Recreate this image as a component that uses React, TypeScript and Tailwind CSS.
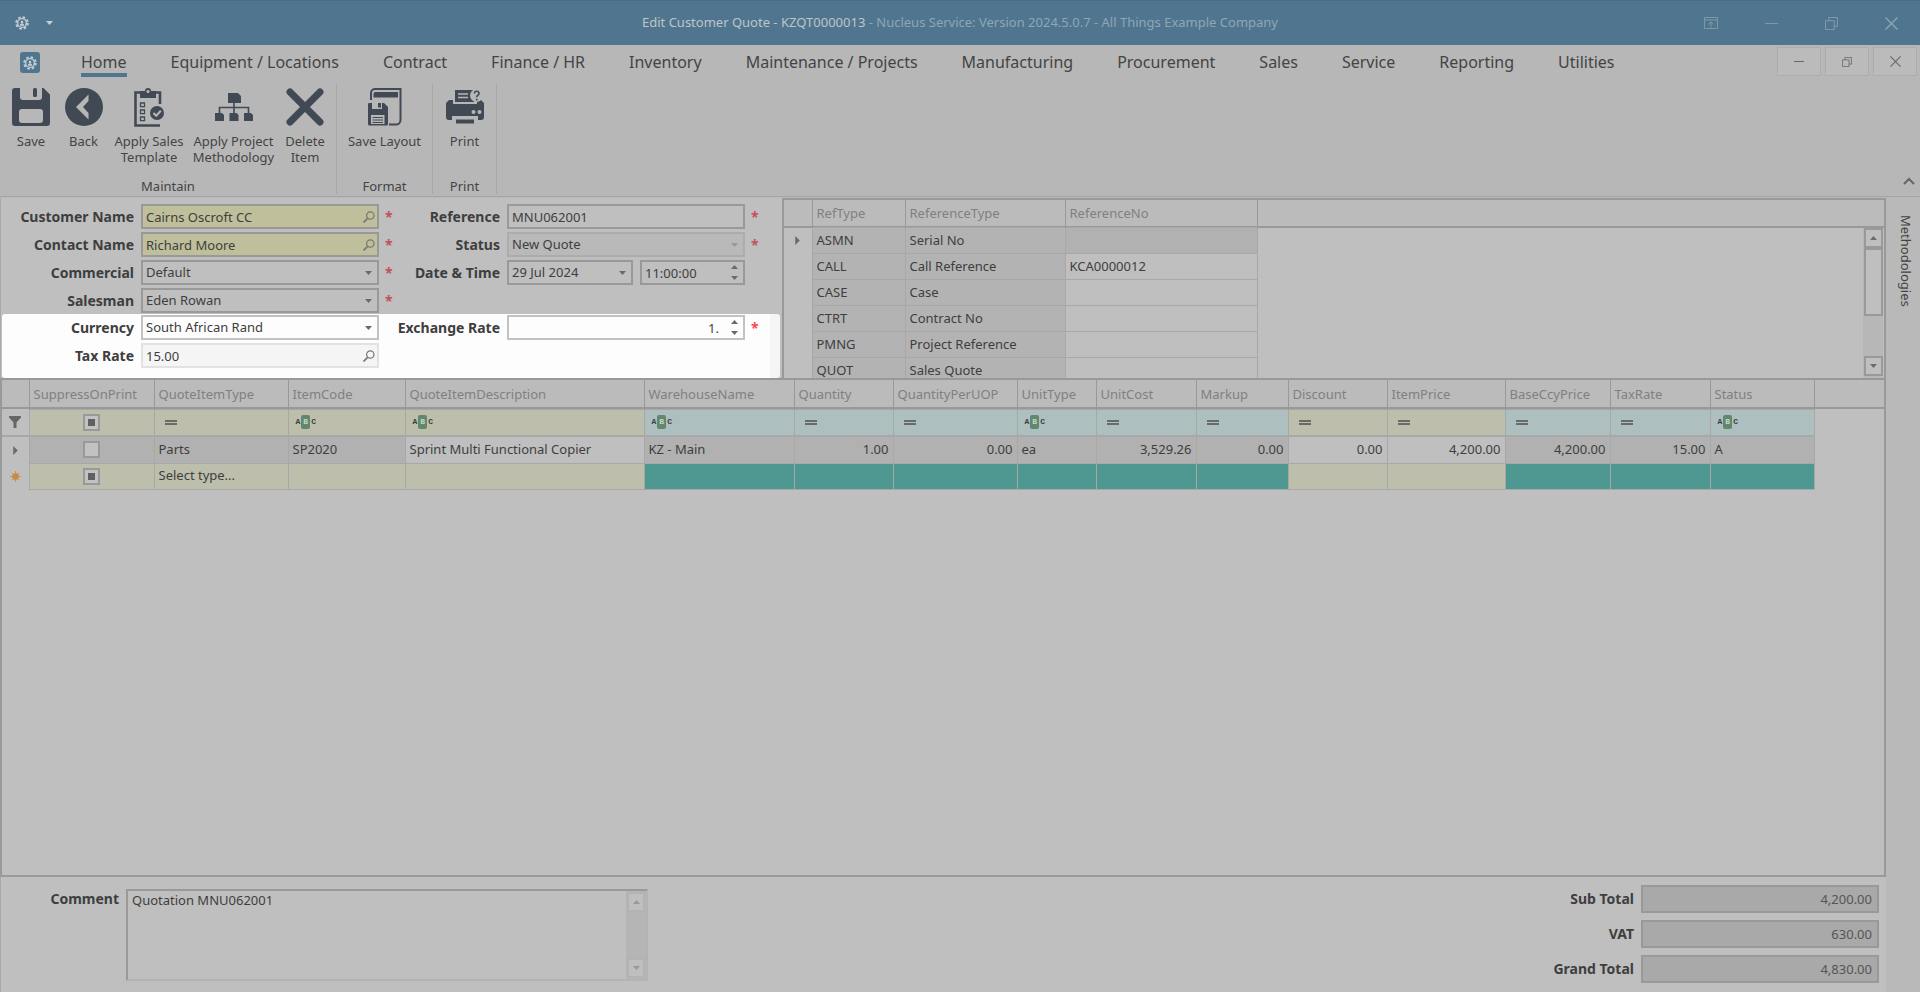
import { useState } from 'react';
import type { ReactNode } from 'react';
import clsx from 'clsx';

const TABS = [
  'Home',
  'Equipment / Locations',
  'Contract',
  'Finance / HR',
  'Inventory',
  'Maintenance / Projects',
  'Manufacturing',
  'Procurement',
  'Sales',
  'Service',
  'Reporting',
  'Utilities',
];

const REFERENCES = [
  { type: 'ASMN', name: 'Serial No', no: '' },
  { type: 'CALL', name: 'Call Reference', no: 'KCA0000012' },
  { type: 'CASE', name: 'Case', no: '' },
  { type: 'CTRT', name: 'Contract No', no: '' },
  { type: 'PMNG', name: 'Project Reference', no: '' },
  { type: 'QUOT', name: 'Sales Quote', no: '' },
];

type QuoteColumn = {
  name: string;
  width: string;
  filter: 'check' | 'equals' | 'text';
  value: string;
  newValue?: string;
  numeric?: boolean;
  editable?: boolean;
  tone: 'sand' | 'teal';
};

const COLUMNS: QuoteColumn[] = [
  { name: 'SuppressOnPrint', width: 'w-[125px]', filter: 'check', value: '', tone: 'sand' },
  { name: 'QuoteItemType', width: 'w-[134px]', filter: 'equals', value: 'Parts', newValue: 'Select type...', tone: 'sand' },
  { name: 'ItemCode', width: 'w-[117px]', filter: 'text', value: 'SP2020', tone: 'sand' },
  { name: 'QuoteItemDescription', width: 'w-[239px]', filter: 'text', value: 'Sprint Multi Functional Copier', editable: true, tone: 'sand' },
  { name: 'WarehouseName', width: 'w-[150px]', filter: 'text', value: 'KZ - Main', tone: 'teal' },
  { name: 'Quantity', width: 'w-[99px]', filter: 'equals', value: '1.00', numeric: true, tone: 'teal' },
  { name: 'QuantityPerUOP', width: 'w-[124px]', filter: 'equals', value: '0.00', numeric: true, tone: 'teal' },
  { name: 'UnitType', width: 'w-[79px]', filter: 'text', value: 'ea', tone: 'teal' },
  { name: 'UnitCost', width: 'w-[100px]', filter: 'equals', value: '3,529.26', numeric: true, tone: 'teal' },
  { name: 'Markup', width: 'w-[92px]', filter: 'equals', value: '0.00', numeric: true, tone: 'teal' },
  { name: 'Discount', width: 'w-[99px]', filter: 'equals', value: '0.00', numeric: true, editable: true, tone: 'sand' },
  { name: 'ItemPrice', width: 'w-[118px]', filter: 'equals', value: '4,200.00', numeric: true, editable: true, tone: 'sand' },
  { name: 'BaseCcyPrice', width: 'w-[105px]', filter: 'equals', value: '4,200.00', numeric: true, tone: 'teal' },
  { name: 'TaxRate', width: 'w-[100px]', filter: 'equals', value: '15.00', numeric: true, tone: 'teal' },
  { name: 'Status', width: 'w-[104px]', filter: 'text', value: 'A', tone: 'teal' },
];

const TOTALS = [
  { id: 'subTotal', label: 'Sub Total', value: '4,200.00' },
  { id: 'vat', label: 'VAT', value: '630.00' },
  { id: 'grandTotal', label: 'Grand Total', value: '4,830.00' },
];

/* ---------- icons ---------- */

function GearIcon({ className }: { className?: string }) {
  return (
    <svg viewBox="0 0 16 16" className={className} fill="none" stroke="currentColor">
      <circle cx="8" cy="8" r="5" strokeWidth="1.6" />
      <circle cx="8" cy="8" r="6.7" strokeWidth="2" strokeDasharray="2.9 2.36" />
      <circle cx="8" cy="6.8" r="1.5" fill="currentColor" stroke="none" />
      <path d="M5.600 11c0-3.600 4.800-3.600 4.800 0z" fill="currentColor" stroke="none" />
    </svg>
  );
}

function SaveIcon() {
  return (
    <svg viewBox="0 0 38 38" className="size-[38px]" fill="currentColor">
      <path
        fillRule="evenodd"
        d="M3 0h5v9a3 3 0 0 0 3 3h16a3 3 0 0 0 3-3V0h1.500l6.500 6.500V35a3 3 0 0 1-3 3H3a3 3 0 0 1-3-3V3a3 3 0 0 1 3-3zM10 21a3 3 0 0 0-3 3v8a3 3 0 0 0 3 3h18a3 3 0 0 0 3-3v-8a3 3 0 0 0-3-3z"
      />
      <rect x="21" y="0" width="4" height="9" rx="1.500" />
    </svg>
  );
}

function BackIcon() {
  return (
    <svg viewBox="0 0 38 38" className="size-[38px]">
      <circle cx="19" cy="19" r="19" fill="currentColor" />
      <path d="M23.500 6.500v6.500L18 19l5.500 6v6.500L11 19z" fill="#b7b7b7" />
    </svg>
  );
}

function ClipboardIcon() {
  return (
    <svg viewBox="0 0 32 40" className="h-10 w-8" fill="none" stroke="currentColor">
      <path d="M27 38.500H2.500v-33H27V17" strokeWidth="2.600" />
      <path d="M7 4h5a3 3 0 0 1 6 0h5v7H7z" fill="currentColor" stroke="none" />
      <circle cx="15" cy="4.500" r="1.600" fill="#b7b7b7" stroke="none" />
      <path d="M7.500 16h4v3.600h-4zM7.500 23h4v3.600h-4zM7.500 30h4v3.600h-4z" strokeWidth="1.300" />
      <circle cx="24" cy="26" r="7" fill="currentColor" stroke="none" />
      <path d="M20.500 26l2.700 2.700 4.600-5" stroke="#b7b7b7" strokeWidth="2" />
    </svg>
  );
}

function OrgIcon() {
  return (
    <svg viewBox="0 0 40 28" className="h-7 w-10" fill="currentColor">
      <path d="M14 0h10l3 3v7H14zM1 20h7l2 2v6H1zM15.500 20h7l2 2v6h-9zM30 20h7l2 2v6h-9z" />
      <path d="M20 9v11M5.500 20v-5.500h29V20" fill="none" stroke="currentColor" strokeWidth="1.600" />
    </svg>
  );
}

function DeleteIcon() {
  return (
    <svg viewBox="0 0 38 38" className="size-[38px]" fill="none" stroke="currentColor" strokeWidth="7" strokeLinecap="round">
      <path d="M4 4l30 30M34 4L4 34" />
    </svg>
  );
}

function SaveLayoutIcon() {
  return (
    <svg viewBox="0 0 36 40" className="h-10 w-9" fill="currentColor">
      <path d="M4 13V6a4 4 0 0 1 4-4h25.500v31a4.500 4.500 0 0 1-4.500 4.500h-7" fill="none" stroke="currentColor" strokeWidth="2" />
      <path d="M8 5h23v5.500H6.500V7A2 2 0 0 1 8 5z" />
      <path
        fillRule="evenodd"
        d="M2 16h3v6h10v-6h2l4 4v17a1.500 1.500 0 0 1-1.500 1.500h-17A1.500 1.500 0 0 1 1 37V17a1 1 0 0 1 1-1zM4 28v9h13.500v-9z"
      />
      <path d="M5.500 30.500h10.500M5.500 33h10.500M5.500 35.500h10.500" stroke="currentColor" strokeWidth="1.200" />
      <rect x="11" y="16" width="3" height="4.500" />
    </svg>
  );
}

function PrintIcon() {
  return (
    <svg viewBox="0 0 38 38" className="size-[38px]" fill="currentColor">
      <path d="M9 2h19v12H9z" />
      <path d="M12 6h10M12 9.500h10" stroke="#b7b7b7" strokeWidth="1.500" />
      <path d="M3 12h4v4h24v-4h4l3 3v14a3 3 0 0 1-3 3h-3v-4H6v4H3a3 3 0 0 1-3-3V15z" />
      <path d="M10 31.500h18v4H10z" />
      <circle cx="27.500" cy="24" r="2" fill="#b7b7b7" />
      <circle cx="33.500" cy="24" r="2" fill="#b7b7b7" />
      <circle cx="30.500" cy="7.500" r="6.500" fill="#b7b7b7" />
      <path d="M28.500 5.500c0-3 4.500-3 4.500 0 0 1.800-2.300 1.700-2.300 3.800M30.700 10.800v1.600" fill="none" stroke="currentColor" strokeWidth="1.600" />
    </svg>
  );
}

function RestoreIcon({ className }: { className?: string }) {
  return (
    <svg viewBox="0 0 12 12" className={className} fill="none" stroke="currentColor">
      <path d="M.5 3.500h8v8h-8zM3.500 3.500v-3h8v8h-3" />
    </svg>
  );
}

function CloseIcon({ className }: { className?: string }) {
  return (
    <svg viewBox="0 0 12 12" className={className} fill="none" stroke="currentColor" strokeWidth="1.200">
      <path d="M.5.5l11 11M11.500.5l-11 11" />
    </svg>
  );
}

function MagnifierIcon() {
  return (
    <svg viewBox="0 0 12 12" className="size-3" fill="none" stroke="#777" strokeWidth="1.200">
      <circle cx="7.300" cy="4.500" r="3.700" />
      <path d="M4.600 7.300L.5 11.500" strokeWidth="1.700" />
    </svg>
  );
}

function Arrow({ dir, className = 'text-[#6a6a6a]' }: { dir: 'up' | 'down' | 'right'; className?: string }) {
  const paths = { up: 'M0 4l3.500-4L7 4z', down: 'M0 0h7L3.500 4z', right: 'M0 0l4 4-4 4z' };
  return dir === 'right' ? (
    <svg viewBox="0 0 4 8" className={clsx('h-[9px] w-[5px]', className)} fill="currentColor">
      <path d={paths.right} />
    </svg>
  ) : (
    <svg viewBox="0 0 7 4" className={clsx('h-1 w-[7px]', className)} fill="currentColor">
      <path d={paths[dir]} />
    </svg>
  );
}

/* ---------- shell ---------- */

function TitleBar() {
  return (
    <header className="grid h-[45px] grid-cols-[1fr_auto_1fr] items-center border-t border-[#4a6c82] bg-[#50768f]">
      <div className="flex items-center gap-[17px] pl-[15px] text-[#c6cfd4]">
        <GearIcon className="size-[14px]" />
        <button type="button" aria-label="Quick access">
          <Arrow dir="down" className="text-[#c6cfd4]" />
        </button>
      </div>
      <h1 className="text-[#bfc4c8]">
        Edit Customer Quote - KZQT0000013
        <span className="text-[#8fa6b5]"> - Nucleus Service: Version 2024.5.0.7 - All Things Example Company</span>
      </h1>
      <div className="flex items-center justify-end gap-[47px] pr-[22px] text-[#7c98a9]">
        <button type="button" aria-label="Ribbon display">
          <svg viewBox="0 0 14 12" className="h-3 w-[14px]" fill="none" stroke="currentColor">
            <path d="M.5.5h13v11H.5zM.5 3h13M7 10.500v-5M4.500 7.500L7 5l2.500 2.500" />
          </svg>
        </button>
        <button type="button" aria-label="Minimise" className="h-px w-[13px] bg-[#7c98a9]" />
        <button type="button" aria-label="Restore">
          <RestoreIcon className="size-[13px]" />
        </button>
        <button type="button" aria-label="Close">
          <CloseIcon className="size-[13px] text-[#8fa6b5]" />
        </button>
      </div>
    </header>
  );
}

function TabBar() {
  const [active, setActive] = useState('Home');

  return (
    <div className="flex h-[35px] items-start bg-[#b7b7b7]">
      <button type="button" aria-label="Application menu" className="mt-[7px] ml-5 flex h-[21px] w-5 items-center justify-center rounded-[3px] bg-[#50768f] text-[#c6cfd4]">
        <GearIcon className="size-[14px]" />
      </button>
      <nav className="ml-[41px] flex gap-11 text-base text-[#444]">
        {TABS.map((tab) => (
          <button
            key={tab}
            type="button"
            onClick={() => setActive(tab)}
            className={clsx('h-8 border-b-4 pt-[6px] leading-[22px] whitespace-nowrap', active === tab ? 'border-[#50768f]' : 'border-transparent')}
          >
            {tab}
          </button>
        ))}
      </nav>
      <div className="mt-[2px] ml-auto flex gap-1 pr-[3px] text-[#666]">
        <WindowButton label="Minimise document">
          <span className="h-px w-[10px] bg-[#666]" />
        </WindowButton>
        <WindowButton label="Restore document">
          <RestoreIcon className="size-[10px]" />
        </WindowButton>
        <WindowButton label="Close document">
          <CloseIcon className="size-[11px]" />
        </WindowButton>
      </div>
    </div>
  );
}

function WindowButton({ label, children }: { label: string; children: ReactNode }) {
  return (
    <button type="button" aria-label={label} className="flex h-[29px] w-11 items-center justify-center border border-[#adadad] bg-[#bbb]">
      {children}
    </button>
  );
}

function RibbonGroup({ title, children }: { title: string; children: ReactNode }) {
  return (
    <section className="flex flex-col border-r border-[#a8a8a8]">
      <div className="flex flex-1">{children}</div>
      <h2 className="text-center leading-4">{title}</h2>
    </section>
  );
}

function RibbonButton({ icon, label, className }: { icon: ReactNode; label: string; className: string }) {
  return (
    <button type="button" className={clsx('flex flex-col items-center gap-[3px]', className)}>
      <span className="flex h-[46px] items-center text-[#414a54]">{icon}</span>
      <span className="leading-4">{label}</span>
    </button>
  );
}

function Ribbon() {
  return (
    <div className="flex h-[117px] border-b border-[#a5a5a5] bg-[#b7b7b7] pt-1 pb-[2px] text-[#444]">
      <RibbonGroup title="Maintain">
        <RibbonButton icon={<SaveIcon />} label="Save" className="ml-1 w-[54px]" />
        <RibbonButton icon={<BackIcon />} label="Back" className="w-[51px]" />
        <RibbonButton icon={<ClipboardIcon />} label="Apply Sales Template" className="w-20" />
        <RibbonButton icon={<OrgIcon />} label="Apply Project Methodology" className="w-[89px]" />
        <RibbonButton icon={<DeleteIcon />} label="Delete Item" className="mr-1 w-[54px]" />
      </RibbonGroup>
      <RibbonGroup title="Format">
        <RibbonButton icon={<SaveLayoutIcon />} label="Save Layout" className="w-[95px]" />
      </RibbonGroup>
      <RibbonGroup title="Print">
        <RibbonButton icon={<PrintIcon />} label="Print" className="w-[63px]" />
      </RibbonGroup>
      <button type="button" aria-label="Collapse ribbon" className="mt-auto mr-[5px] mb-[9px] ml-auto">
        <svg viewBox="0 0 12 8" className="h-2 w-3" fill="none" stroke="#666" strokeWidth="2">
          <path d="M1 7l5-5 5 5" />
        </svg>
      </button>
    </div>
  );
}

/* ---------- quote form ---------- */

interface FieldProps {
  id: string;
  label: string;
  value: string;
  kind?: 'text' | 'lookup' | 'select' | 'spin';
  look?: string;
  required?: boolean;
  align?: string;
  faded?: boolean;
  labelWidth?: string;
  starColor?: string;
}

const DIM = 'border-[#999] bg-[#bfbfbf]';
const BRIGHT = 'border-[#c2c2c2] bg-[#fdfdfd]';
const NARROW = 'w-[107px]';

function Control({ id, label, value, kind = 'text', look = DIM, align, faded }: FieldProps) {
  const box = clsx('h-[25px] w-full border-2 px-[3px] outline-none', look, align);
  return (
    <div className="relative min-w-0 flex-1">
      {kind === 'select' ? (
        <select id={id} className={clsx(box, 'appearance-none')} defaultValue={value}>
          <option>{value}</option>
        </select>
      ) : (
        <input id={id} className={clsx(box, kind !== 'text' && 'pr-6')} defaultValue={value} />
      )}
      {kind === 'select' && (
        <span className="pointer-events-none absolute inset-y-0 right-[7px] flex items-center">
          <Arrow dir="down" className={faded ? 'text-[#999]' : undefined} />
        </span>
      )}
      {kind === 'lookup' && (
        <button type="button" aria-label={`Find ${label}`} className="absolute inset-y-0 right-1 flex items-center">
          <MagnifierIcon />
        </button>
      )}
      {kind === 'spin' && (
        <span className="absolute inset-y-0 right-[7px] flex flex-col justify-center gap-[7px]">
          <button type="button" aria-label={`Increase ${label}`}>
            <Arrow dir="up" />
          </button>
          <button type="button" aria-label={`Decrease ${label}`}>
            <Arrow dir="down" />
          </button>
        </span>
      )}
    </div>
  );
}

function Field({ children, labelWidth = 'w-[132px]', starColor = 'text-[#c4505a]', ...field }: FieldProps & { children?: ReactNode }) {
  return (
    <div className="flex h-[25px] items-center">
      <label htmlFor={field.id} className={clsx('shrink-0 text-right text-sm font-bold whitespace-nowrap', labelWidth)}>
        {field.label}
      </label>
      <div className="ml-[7px] flex w-[238px] shrink-0 gap-[7px]">{children ?? <Control {...field} />}</div>
      {field.required && <span className={clsx('ml-[6px] text-sm font-bold', starColor)}>*</span>}
    </div>
  );
}

function QuoteForm() {
  const khaki = 'border-[#999] bg-[#bfbf9b]';
  return (
    <form className="flex w-[782px] shrink-0 flex-col border-l border-[#aaa] bg-[#bfbfbf] pt-[6px] pr-[2px] pl-px text-[#3e3e3e]">
      <div className="grid grid-cols-[391px_1fr] gap-y-[3px] pb-px">
        <Field id="customer" label="Customer Name" value="Cairns Oscroft CC" kind="lookup" look={khaki} required />
        <Field id="reference" label="Reference" value="MNU062001" labelWidth={NARROW} required />
        <Field id="contact" label="Contact Name" value="Richard Moore" kind="lookup" look={khaki} required />
        <Field id="status" label="Status" value="New Quote" kind="select" look="border-[#acacac] bg-[#b9b9b9]" labelWidth={NARROW} faded required />
        <Field id="commercial" label="Commercial" value="Default" kind="select" required />
        <Field id="date" label="Date & Time" value="" labelWidth={NARROW}>
          <div className="flex w-[126px]">
            <Control id="date" label="Date" value="29 Jul 2024" kind="select" />
          </div>
          <Control id="time" label="Time" value="11:00:00" kind="spin" />
        </Field>
        <Field id="salesman" label="Salesman" value="Eden Rowan" kind="select" required />
      </div>
      <div className="grid h-16 grid-cols-[391px_1fr] content-start gap-y-[3px] rounded-[3px] border-r-[10px] border-[#f5f5f5] bg-[#fdfdfd] pt-px">
        <Field id="currency" label="Currency" value="South African Rand" kind="select" look={BRIGHT} />
        <Field
          id="rate"
          label="Exchange Rate"
          value="1."
          kind="spin"
          look={BRIGHT}
          align="text-right"
          labelWidth={NARROW}
          starColor="text-[#ff4552]"
          required
        />
        <Field id="tax" label="Tax Rate" value="15.00" kind="lookup" look="border-[#e2e2e2] bg-[#f5f5f5]" />
      </div>
    </form>
  );
}

function ReferencePanel() {
  return (
    <section className="flex min-w-0 flex-1 flex-col overflow-hidden border-x-2 border-t-2 border-[#999] bg-[#bfbfbf]">
      <div className="h-7 shrink-0 border-b-2 border-[#999] bg-[#bbb]" />
      <div className="-mt-7 flex min-h-0 flex-1">
        <div className="flex-1 overflow-hidden">
          <table className="table-fixed border-collapse text-left leading-[14px] text-[#3e3e3e]">
            <thead>
              <tr className="h-[27px] text-[#808080]">
                <th className="w-[28px] border-r border-[#999]" aria-label="Row" />
                <th className="w-[93px] border-r border-[#999] px-1 font-normal">RefType</th>
                <th className="w-[160px] border-r border-[#999] px-1 font-normal">ReferenceType</th>
                <th className="w-[192px] border-r border-[#999] px-1 font-normal">ReferenceNo</th>
              </tr>
            </thead>
            <tbody>
              {REFERENCES.map((ref, i) => (
                <tr key={ref.type} className="h-[26px]">
                  <td className="border-r border-[#a8a8a8]">
                    {i === 0 && (
                      <span className="flex justify-center">
                        <Arrow dir="right" />
                      </span>
                    )}
                  </td>
                  <td className="border border-[#a8a8a8] bg-[#b3b3b3] px-1">{ref.type}</td>
                  <td className="border border-[#a8a8a8] bg-[#b3b3b3] px-1">{ref.name}</td>
                  <td className={clsx('border border-[#a8a8a8] px-1', i === 0 && 'bg-[#b1b1b1]')}>{ref.no}</td>
                </tr>
              ))}
            </tbody>
          </table>
        </div>
        <div className="mt-7 mr-px flex w-[20px] flex-col bg-[#b7b7b7] pb-[2px] pl-px">
          <ScrollButton dir="up" />
          <div className="h-[68px] border-2 border-[#999] bg-[#bfbfbf]" />
          <div className="mt-auto flex flex-col">
            <ScrollButton dir="down" />
          </div>
        </div>
      </div>
    </section>
  );
}

function ScrollButton({ dir, faded = false }: { dir: 'up' | 'down'; faded?: boolean }) {
  return (
    <button
      type="button"
      aria-label={`Scroll ${dir}`}
      className={clsx('flex h-5 shrink-0 items-center justify-center border-2 bg-[#bfbfbf]', faded ? 'border-[#b3b3b3]' : 'border-[#999]')}
    >
      <Arrow dir={dir} className={faded ? 'text-[#999]' : 'text-[#6a6a6a]'} />
    </button>
  );
}

/* ---------- item grid ---------- */

function GridCheckbox({ label, defaultChecked = false }: { label: string; defaultChecked?: boolean }) {
  return (
    <input
      type="checkbox"
      aria-label={label}
      defaultChecked={defaultChecked}
      className="mx-auto block size-[17px] appearance-none border-2 border-[#999] bg-[#c2c2c2] shadow-[inset_0_0_0_3px_#c2c2c2] checked:bg-[#606060]"
    />
  );
}

function FilterMark({ kind }: { kind: QuoteColumn['filter'] }) {
  if (kind === 'check') return <GridCheckbox label="Filter SuppressOnPrint" defaultChecked />;
  if (kind === 'equals') {
    return (
      <svg viewBox="0 0 12 5" className="ml-[6px] h-[5px] w-3" stroke="#505050" strokeWidth="1.500">
        <path d="M0 1h12M0 4h12" />
      </svg>
    );
  }
  return (
    <span className="ml-[3px] flex items-center font-['Liberation_Mono',monospace] text-[8px] leading-[14px] font-bold">
      A<span className="mx-px rounded-[2px] bg-[#63876c] px-[2px] text-[#c4d4c7]">B</span>C
    </span>
  );
}

function ItemGrid() {
  return (
    <section className="flex-1 overflow-hidden border-2 border-[#999] bg-[#bfbfbf]">
      <div className="h-[29px] border-b-2 border-[#999] bg-[#bbb]" />
      <table className="-mt-[29px] w-[1811px] table-fixed border-collapse text-left text-[#3e3e3e]">
        <thead>
          <tr className="h-[29px] text-[#808080]">
            <th className="w-[27px] border-r border-[#999]" aria-label="Row" />
            {COLUMNS.map((col) => (
              <th key={col.name} className={clsx('border-r border-[#999] px-1 font-normal', col.width)}>
                {col.name}
              </th>
            ))}
          </tr>
        </thead>
        <tbody>
          <tr className="h-[27px] border-b-2 border-[#a8a8a8]">
            <td>
              <svg viewBox="0 0 12 12" className="mx-auto size-3" fill="#666">
                <path d="M0 0h12v1.500L7.500 6.500V12h-3V6.500L0 1.500z" />
              </svg>
            </td>
            {COLUMNS.map((col) => (
              <td key={col.name} className={clsx('border border-[#a8a8a8] px-1', col.tone === 'sand' ? 'bg-[#bdbeab]' : 'bg-[#aebfbf]')}>
                <FilterMark kind={col.filter} />
              </td>
            ))}
          </tr>
          <tr className="h-[27px]">
            <td>
              <span className="flex justify-center">
                <Arrow dir="right" />
              </span>
            </td>
            {COLUMNS.map((col) => (
              <td
                key={col.name}
                className={clsx('border border-[#a8a8a8] px-1', col.numeric && 'text-right', !col.editable && 'bg-[#b1b1b1]')}
              >
                {col.filter === 'check' ? <GridCheckbox label="Suppress Parts on print" /> : col.value}
              </td>
            ))}
          </tr>
          <tr className="h-[26px]">
            <td>
              <svg viewBox="0 0 12 12" className="mx-auto size-[11px]" fill="#c88a3e" stroke="#c88a3e">
                <circle cx="6" cy="6" r="3.600" stroke="none" />
                <path d="M6 0v12M0 6h12M2 2l8 8M10 2l-8 8" strokeWidth=".9" />
              </svg>
            </td>
            {COLUMNS.map((col) => (
              <td key={col.name} className={clsx('border border-[#a8a8a8] px-1', col.tone === 'sand' ? 'bg-[#bdbeab]' : 'bg-[#4f9892]')}>
                {col.filter === 'check' ? <GridCheckbox label="Suppress new item on print" defaultChecked /> : col.newValue}
              </td>
            ))}
          </tr>
        </tbody>
      </table>
    </section>
  );
}

function Footer() {
  return (
    <footer className="flex justify-between border-l border-[#aaa] bg-[#bfbfbf] text-[#3e3e3e]">
      <div className="flex pt-3">
        <label htmlFor="comment" className="w-[118px] text-right text-sm font-bold">
          Comment
        </label>
        <div className="ml-[7px] flex h-[92px] w-[522px] border-2 border-t-[#999] border-r-[#b3b3b3] border-b-[#b3b3b3] border-l-[#999]">
          <textarea id="comment" className="flex-1 resize-none px-1 outline-none" defaultValue="Quotation MNU062001" />
          <div className="flex w-[20px] flex-col justify-between bg-[#b5b5b5] p-px">
            <ScrollButton dir="up" faded />
            <ScrollButton dir="down" faded />
          </div>
        </div>
      </div>
      <div className="flex flex-col gap-[7px] pt-2 pr-[7px] pb-[9px]">
        {TOTALS.map((total) => (
          <div key={total.id} className="flex items-center justify-end gap-[7px]">
            <label htmlFor={total.id} className="text-sm font-bold">
              {total.label}
            </label>
            <input
              id={total.id}
              readOnly
              value={total.value}
              className="h-7 w-[238px] border-2 border-[#999] bg-[#a9a9a9] px-[5px] text-right text-[#555] outline-none"
            />
          </div>
        ))}
      </div>
    </footer>
  );
}

export default function App() {
  return (
    <div className="flex min-h-screen flex-col bg-[#b9b9b9] font-['Noto_Sans',sans-serif] text-[13px]">
      <TitleBar />
      <TabBar />
      <Ribbon />
      <div className="flex flex-1">
        <main className="flex min-w-0 flex-1 flex-col">
          <div className="flex h-[181px] pt-px">
            <QuoteForm />
            <ReferencePanel />
          </div>
          <ItemGrid />
          <Footer />
        </main>
        <aside className="flex w-[34px] shrink-0 justify-center pt-[18px] pl-1 text-[#444]">
          <button type="button" className="h-[92px] [writing-mode:vertical-rl]">
            Methodologies
          </button>
        </aside>
      </div>
    </div>
  );
}
